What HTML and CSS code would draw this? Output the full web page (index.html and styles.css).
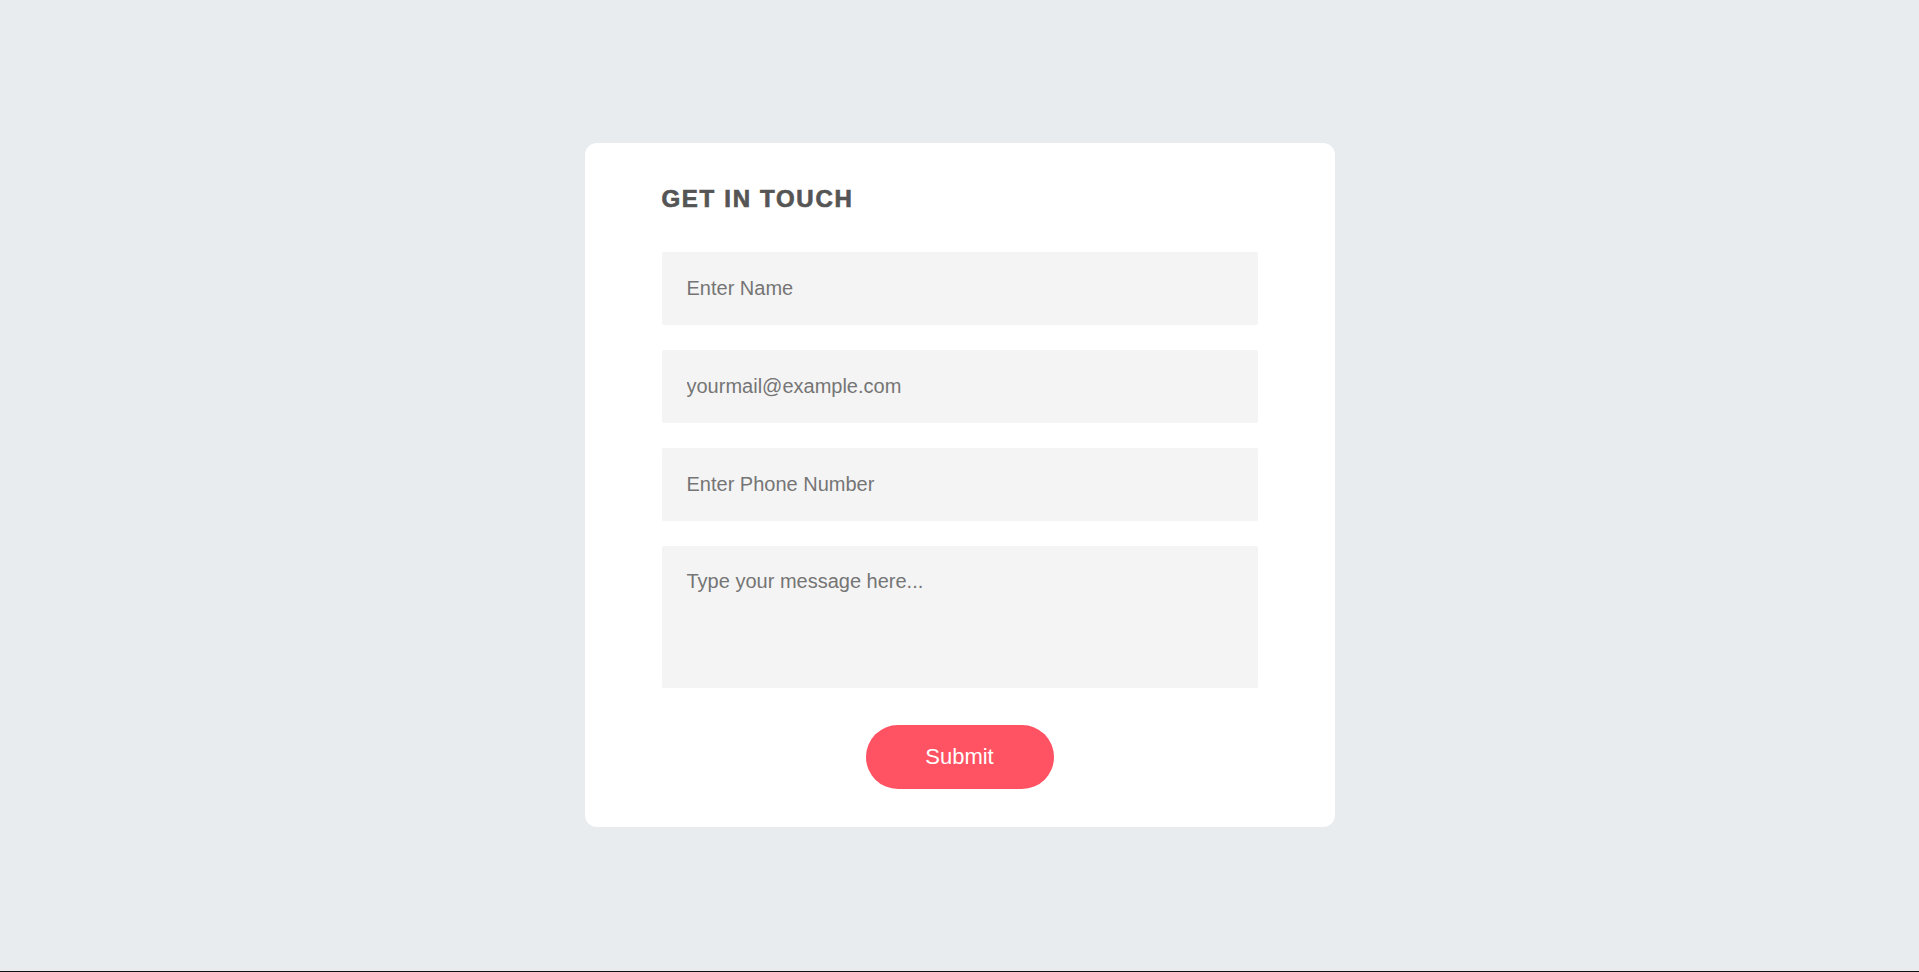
FILE: index.html
```html
<!DOCTYPE html>
<html lang="en">
<head>
<meta charset="utf-8">
<title>Get in touch</title>
<link rel="stylesheet" href="styles.css">
</head>
<body>
<main class="page">
  <form class="card" onsubmit="return false">
    <h2 class="card-title">GET IN TOUCH</h2>
    <input class="field" type="text" placeholder="Enter Name">
    <input class="field" type="email" placeholder="yourmail@example.com">
    <input class="field" type="tel" placeholder="Enter Phone Number">
    <textarea class="field field-area" placeholder="Type your message here..."></textarea>
    <div class="actions">
      <button class="submit" type="submit">Submit</button>
    </div>
  </form>
</main>
<div class="bottom-line"></div>
</body>
</html>
```
FILE: styles.css
```css
html, body {
  margin: 0;
  height: 100%;
}
body {
  display: flex;
  flex-direction: column;
  background: #e8ecef;
  font-family: "Liberation Sans", Arial, sans-serif;
}
.page {
  flex: 1;
  display: flex;
  align-items: center;
  justify-content: center;
  padding-bottom: 2px;
}
.bottom-line {
  height: 1px;
  background: #111;
}
.card {
  box-sizing: border-box;
  width: 750px;
  background: #ffffff;
  border-radius: 12px;
  padding: 42px 77px 38px;
  display: flex;
  flex-direction: column;
}
.card-title {
  margin: 0 0 39px;
  font-size: 24px;
  line-height: 28px;
  font-weight: 700;
  letter-spacing: 1.7px;
  color: #555555;
  -webkit-text-stroke: 0.7px #555555;
}
.field {
  box-sizing: border-box;
  display: block;
  width: 100%;
  height: 73px;
  margin: 0 0 25px;
  padding: 0 25px;
  border: none;
  border-radius: 2px;
  background: #f4f4f4;
  font-family: "Liberation Sans", Arial, sans-serif;
  font-size: 20px;
  color: #555;
  outline: none;
}
.field::placeholder {
  color: #757575;
  opacity: 1;
}
.field-area {
  height: 142px;
  margin-bottom: 37px;
  padding: 24px 25px;
  resize: none;
  line-height: 23px;
}
.actions {
  display: flex;
  justify-content: center;
}
.submit {
  width: 188px;
  height: 64px;
  border: none;
  border-radius: 32px;
  background: #ff5263;
  color: #ffffff;
  font-family: "Liberation Sans", Arial, sans-serif;
  font-size: 22px;
  cursor: pointer;
}
```
